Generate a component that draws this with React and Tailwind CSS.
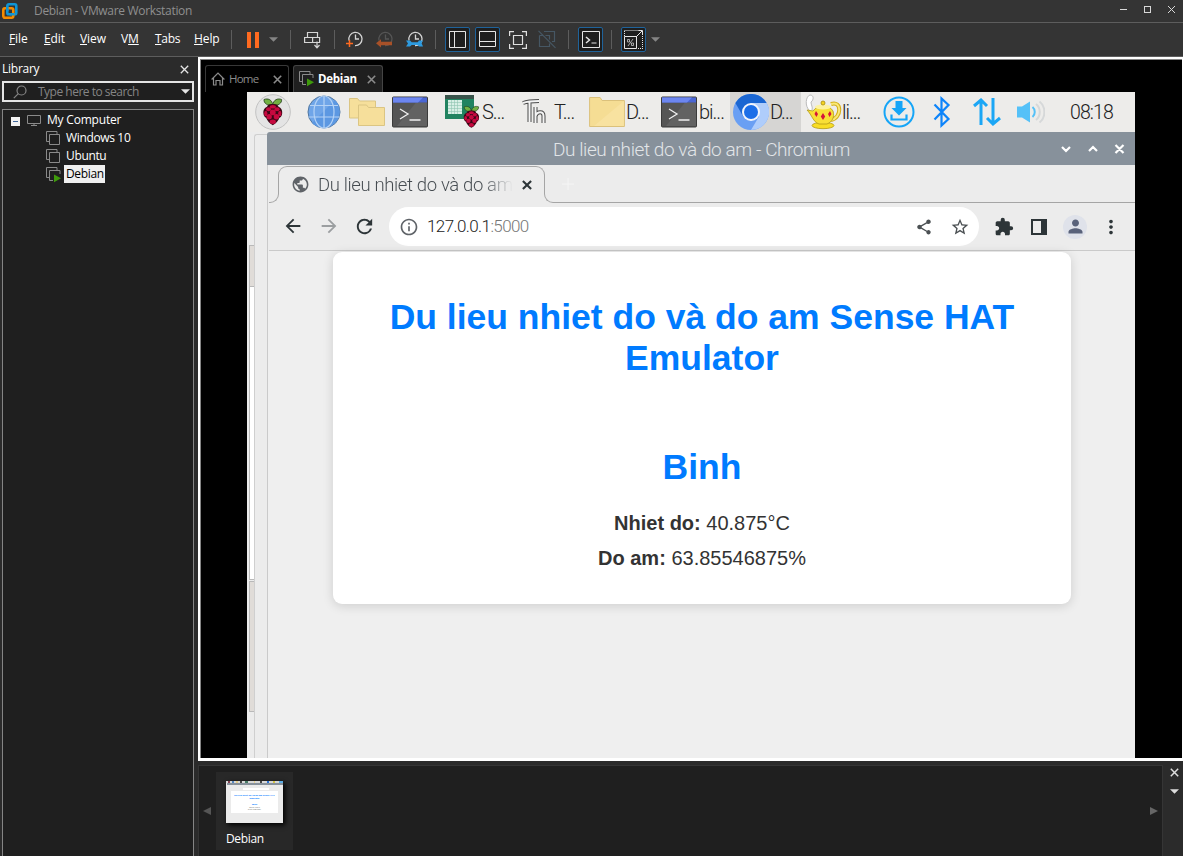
import React from "react";
import {
  MdArrowBack, MdArrowForward, MdRefresh, MdInfoOutline, MdPublic, MdShare,
  MdStarBorder, MdExtension, MdPerson, MdMoreVert,
} from "react-icons/md";

const ui = "font-['Open_Sans','Noto_Sans',sans-serif] text-[12px] leading-[16px] whitespace-nowrap";
const pi = "font-[Roboto,sans-serif] font-light whitespace-nowrap";

function Cross({ className, size = 9, w = 1.6 }) {
  return (
    <svg className={className} width={size} height={size} viewBox="0 0 9 9" fill="none" stroke="currentColor" strokeWidth={w}>
      <path d="M.8.8l7.4 7.4M8.2.8L.8 8.2" />
    </svg>
  );
}

function VmLogo() {
  return (
    <svg width="18" height="18" viewBox="0 0 18 18" fill="none" strokeWidth="2.6">
      <rect x="6.3" y="2.3" width="9" height="10" rx="1.6" stroke="#0f95d4" />
      <rect x="2.3" y="6.3" width="10" height="9.4" rx="1.6" stroke="#f38b00" />
      <path d="M6.3 9V4.5M8.5 12.3h5" stroke="#0f95d4" />
    </svg>
  );
}

function TitleBar() {
  return (
    <header className="flex h-[23px] items-center border-b border-[#5d5d5d] pl-px">
      <VmLogo />
      <span className={`${ui} ml-[15px] w-[1085px] tracking-[-0.32px] text-[#8f8f8f]`}>Debian - VMware Workstation</span>
      <svg width="57" height="9" viewBox="0 0 57 9" fill="none" stroke="#d8d8d8" className="-mt-[3px]">
        <path d="M1 4.5h7" />
        <rect x="25.5" y="1.5" width="6" height="6" />
        <path d="M49 1l7 7M56 1l-7 7" />
      </svg>
    </header>
  );
}

function Clock({ color, children }) {
  return (
    <svg width="18" height="18" viewBox="0 0 18 18" fill="none" stroke={color} strokeWidth="1.3">
      <path d="M3 10.5A6.6 6.6 0 1 1 9 15.6" />
      <path d="M9.5 4.5V9H13" />
      {children}
    </svg>
  );
}

function Boxed({ children }) {
  return <div className="flex size-[25px] items-center justify-center rounded-[2px] border border-[#1f639b] bg-[#1e1e1e]">{children}</div>;
}

const Sep = ({ className }) => <div className={`h-[19px] w-px bg-[#5d5d5d] ${className}`} />;
const Caret = ({ className }) => (
  <svg className={className} width="9" height="5" viewBox="0 0 9 5" fill="currentColor"><path d="M0 .2h9L4.5 4.8z" /></svg>
);

function MenuBar() {
  return (
    <nav className="flex h-[33px] items-center pl-[9px] text-white">
      <div className={`${ui} -mt-px flex tracking-[-0.1px]`}>
        <span className="w-[35px]"><u>F</u>ile</span>
        <span className="w-[36px]"><u>E</u>dit</span>
        <span className="w-[41px]"><u>V</u>iew</span>
        <span className="w-[34px]">V<u>M</u></span>
        <span className="w-[39px] tracking-[-0.3px]"><u>T</u>abs</span>
        <span className="w-[37px]"><u>H</u>elp</span>
      </div>
      <Sep />
      <svg className="ml-[15px]" width="12" height="16" fill="#ff6a1f"><path d="M0 0h4v16H0zM8 0h4v16H8z" /></svg>
      <Caret className="ml-[10px] text-[#858585]" />
      <Sep className="ml-[12px]" />
      <svg className="ml-[13px]" width="18" height="18" viewBox="0 0 18 18" fill="none" stroke="#d5d5d5" strokeWidth="1.200">
        <path d="M3.500 1.500h10v5h-10zM.6 6.500h8v5h-8zM8.600 6.500h7v5h-7zM13 10.500v6M10.500 14l2.500 2.800 2.500-2.800" />
      </svg>
      <Sep className="ml-[12px]" />
      <div className="-mt-px ml-[11px] flex gap-[12px]">
        <Clock color="#d5d5d5"><path d="M3.500 10v7M0 13.500h7" stroke="#ff6a1f" strokeWidth="1.500" /></Clock>
        <Clock color="#555"><path d="M0 13.200l5-4v2.500h11v3.600H5v2.100z" fill="#a85128" stroke="none" /></Clock>
        <Clock color="#d5d5d5"><path d="M0 10.500h4l1.700 1.700h6l1.300-1.700h4l-1.500 2.500 1.500 3.500h-4l-1.300-1.500h-6L4 16.500H0l2-3z" fill="#2d9be0" stroke="none" /></Clock>
      </div>
      <Sep className="ml-[11px]" />
      <div className="ml-[9px] flex gap-[5px]">
        <Boxed>
          <svg width="17" height="17" fill="none" stroke="#e5e5e5"><path d="M.5 .5h16v16H.5zM5.500 .5v16" /></svg>
        </Boxed>
        <Boxed>
          <svg width="17" height="17" fill="none" stroke="#e5e5e5"><path d="M.5 .5h16v15H.5zM.5 10.500h16" /></svg>
        </Boxed>
        <div className="flex size-[25px] items-center justify-center">
          <svg width="18" height="18" fill="none" stroke="#e0e0e0" strokeWidth="1.200"><path d="M.6 5V.6H5M13 .6h4.400V5M17.400 13v4.400H13M5 17.400H.6V13M4.500 4.500h9v9h-9z" /></svg>
        </div>
        <div className="flex size-[25px] items-center justify-center">
          <svg width="19" height="19" fill="none" stroke="#465764" strokeWidth="1.200"><path d="M.5 .8l17 17M6 1.500h10.500v10H14M1.500 5.500h3M1.500 5.500v11h10v-3M7.500 5.500h4v4" /></svg>
        </div>
      </div>
      <Sep className="ml-[8px]" />
      <div className="ml-[9px]">
        <Boxed>
          <svg width="18" height="18" fill="none" stroke="#e5e5e5"><path d="M.5 .5h17v16H.5zM9.500 12h5" /><path d="M4 6l3.500 3L4 12" strokeWidth="1.500" /></svg>
        </Boxed>
      </div>
      <Sep className="ml-[8px]" />
      <div className="ml-[9px]">
        <Boxed>
          <svg width="19" height="19" fill="none" stroke="#e5e5e5">
            <path d="M.5 .5h18M18.500 2v17M14 18.500h5M.5 1v5" strokeDasharray="1 1" />
            <path d="M.5 6.500h12v12H.5zM12 7l6-6M14.500 .5h4v4" />
            <path d="M4 16l5-7M3.500 9.500h2v2.500h-2zM7.500 13h2v2.500h-2z" stroke="#b5b5b5" strokeWidth=".9" />
          </svg>
        </Boxed>
      </div>
      <Caret className="ml-[5px] text-[#858585]" />
    </nav>
  );
}

function VmIcon({ running, className }) {
  return (
    <svg className={className} width="16" height="16" viewBox="0 0 16 16" fill="none" stroke="#8a8a8a">
      <path d="M3 10.500H.5V.5h10.500V3" />
      <path d={running ? "M7 13.500H3.500v-10h10.500V7" : "M3.500 3.500h10v10h-10z"} />
      {running && <path d="M8 7.500l7 3.800-7 4z" fill="#3f9b0b" stroke="none" />}
    </svg>
  );
}

function Library() {
  return (
    <aside className="flex w-[198px] shrink-0 flex-col border-t border-[#5d5d5d] bg-[#2b2b2b] pl-[2px] pr-[4px] text-white">
      <div className="flex h-[24px] items-center justify-between pr-[5px]">
        <span className={`${ui} tracking-[-0.25px]`}>Library</span>
        <Cross className="text-[#e5e5e5]" w={1.300} />
      </div>
      <div className="flex h-[21px] items-center border-2 border-[#e4e4e4] bg-[#1f1f1f] pl-[9px] pr-[2px]">
        <svg width="14" height="14" fill="none" stroke="#858585" strokeWidth="1.200"><circle cx="8.500" cy="5.500" r="4.500" /><path d="M5.300 8.700L.8 13.200" /></svg>
        <span className={`${ui} ml-[11px] grow tracking-[-0.5px] text-[#858585]`}>Type here to search</span>
        <Caret className="text-[#e5e5e5]" />
      </div>
      <div className={`${ui} mt-[7px] grow border border-b-0 border-[#858585] bg-[#1f1f1f] pt-px`}>
        <div className="flex h-[18px] items-center pl-[8px]">
          <svg className="mt-[2px]" width="9" height="9"><path fill="#f2f2f2" d="M0 0h9v9H0z" /><path fill="#42699c" d="M2 4h5v1H2z" /></svg>
          <svg className="mt-[2px] ml-[7px]" width="15" height="13" fill="none" stroke="#8a8a8a"><path d="M.5 .5h13v8H.5zM4 10.500h6M7 8.500v2" /></svg>
          <span className="ml-[5px] tracking-[-0.2px]">My Computer</span>
        </div>
        {["Windows 10", "Ubuntu", "Debian"].map((n) => (
          <div key={n} className="flex h-[18px] items-center pl-[43px]">
            <VmIcon className="mt-px" running={n === "Debian"} />
            <span className={n === "Debian" ? "ml-[2px] h-[18px] w-[41px] bg-[#f0f0f0] pl-[2px] leading-[18px] tracking-[-0.35px] text-black" : "ml-[4px] tracking-[-0.35px]"}>{n}</span>
          </div>
        ))}
      </div>
    </aside>
  );
}

function VmTabs() {
  return (
    <div className={`${ui} flex h-[32px] items-end gap-[4px] pl-[4px]`}>
      <div className="flex h-[27px] w-[84px] items-center rounded-t-[3px] border border-b-0 border-[#383838] pl-[5px] text-[#8b8b8b]">
        <svg width="14" height="14" fill="none" stroke="currentColor" strokeWidth="1.200"><path d="M.6 7.500L7 1l6.400 6.500M2.500 6v7H5V8.500h4V13h2.500V6" /></svg>
        <span className="ml-[4px] w-[44px] text-[11.500px] tracking-[-0.8px]">Home</span>
        <Cross />
      </div>
      <div className="flex h-[27px] w-[90px] items-center rounded-t-[3px] border border-b-0 border-[#444] bg-[#1f1f1f] pl-[5px] text-[#8b8b8b]">
        <VmIcon running />
        <span className="ml-[3px] w-[49px] text-[11.500px] font-bold tracking-[-0.3px] text-white">Debian</span>
        <Cross />
      </div>
    </div>
  );
}

function Berry({ x = 0, y = 0, s = 1 }) {
  return (
    <g transform={`translate(${x} ${y}) scale(${s})`}>
      <path d="M10 6.500C5 7.500 1 4.500 1.500 1 5-.5 9.500 1 10 6.500zM10 6.500c5 1 9-2 8.500-5.500C15-.5 10.500 1 10 6.500z" fill="#72b043" stroke="#24401c" strokeWidth=".8" />
      <path d="M10 5.500c3-.6 5 .6 5.600 2.500 2.400.8 4 3.400 3.500 6.500-.1 2-1.400 3.500-2.600 4.300C15.600 21.500 13 24.500 10 26c-3-1.500-5.600-4.500-6.500-7.200C2.300 18 1 16.500.9 14.500.4 11.400 2 8.800 4.400 8 5 6.100 7 4.900 10 5.500z" fill="#3a0716" />
      <g fill="#c6093f">
        <ellipse cx="10" cy="8" rx="3" ry="1.800" /><ellipse cx="5.900" cy="10.400" rx="2.500" ry="2" /><ellipse cx="14.100" cy="10.400" rx="2.500" ry="2" />
        <circle cx="10" cy="13.500" r="2.800" /><ellipse cx="3.200" cy="14.500" rx="1.600" ry="2.600" /><ellipse cx="16.800" cy="14.500" rx="1.600" ry="2.600" />
        <circle cx="6.500" cy="17.700" r="2.600" /><circle cx="13.500" cy="17.700" r="2.600" /><ellipse cx="10" cy="22.500" rx="3" ry="2.200" />
      </g>
    </g>
  );
}

function TermIcon() {
  return (
    <svg width="36" height="32" viewBox="0 0 36 32">
      <rect x=".5" y="1" width="35" height="30" rx="1" fill="#555" stroke="#3b3b3b" />
      <path d="M24 6.500h11V30H5z" fill="#626262" />
      <path d="M1 1.500h34v5H1z" fill="#4a66d4" /><path d="M1 1.500h30l-5 5H1z" fill="#6c86f0" />
      <path d="M8 13l8 5-8 5M17.500 24h11" fill="none" stroke="#f0f0f0" strokeWidth="1.300" />
    </svg>
  );
}

function FolderIcon() {
  return (
    <svg width="36" height="32" viewBox="0 0 36 32">
      <path d="M.6 1.500h10.500l2 3h22.300v26H.6z" fill="#f5dd94" stroke="#dbc17b" />
      <path d="M34.900 5v25H5z" fill="#f8e2a0" />
    </svg>
  );
}

function PiPanel() {
  return (
    <div className={`${pi} flex h-[40px] items-center bg-[#edecea] pl-[8px] text-[20px] tracking-[-1px] text-[#222]`}>
      <svg width="36" height="36" viewBox="0 0 36 36"><circle cx="18" cy="18" r="17.300" fill="#e4e4e4" stroke="#c2c2c2" /><Berry x={7.500} y={4.500} s={1.030} /></svg>
      <svg className="ml-[16px]" width="34" height="34" viewBox="0 0 34 34">
        <circle cx="17" cy="17" r="16" fill="#6fa5e8" stroke="#52779f" />
        <path d="M5 28L28 5a16 16 0 0 1-23 23z" fill="#5c98e2" />
        <g fill="none" stroke="#b4d2f5" strokeWidth="1.200"><path d="M17 1v32M3 10.500h28M1.500 22h31" /><ellipse cx="17" cy="17" rx="10" ry="16" /></g>
      </svg>
      <svg className="ml-[8px]" width="36" height="32" viewBox="0 0 36 32" fill="#f6df9b" stroke="#dbc583">
        <path d="M.5 2.500h8l2 2.500h16v17H.5z" /><path d="M9.500 9h8l2 2.500h16v18h-26z" />
      </svg>
      <div className="ml-[7px]"><TermIcon /></div>
      <svg className="ml-[16px]" width="36" height="34" viewBox="0 0 36 34">
        <path d="M1 2h29v22H1z" fill="#218360" /><path d="M1 0h29v4H1z" fill="#38534a" />
        <path d="M4 5h14v14H4z" fill="#d7efe5" /><path d="M4 7.500h14M4 10.500h14M4 13.500h14M4 16.500h14M7.500 5v14M10.500 5v14M13.500 5v14" stroke="#8fc4b0" strokeWidth=".6" />
        <Berry x={19} y={11} s={.84} />
      </svg>
      <span className="w-[42px] pl-[2px]">S...</span>
      <svg width="24" height="26" viewBox="0 0 24 26" fill="none" strokeLinejoin="round">
        <path d="M1 4c5-2 11-2 16-2M7.500 3v20M13.500 8v16M13.500 17c2-5 8-5 8 0v7" stroke="#4b4b4b" strokeWidth="4" />
        <path d="M1 4c5-2 11-2 16-2M7.500 3v20M13.500 8v16M13.500 17c2-5 8-5 8 0v7" stroke="#f4f4f4" strokeWidth="2" />
      </svg>
      <span className="w-[43px] pl-[8px]">T...</span>
      <FolderIcon /><span className="w-[36px] pl-px">D...</span>
      <TermIcon /><span className="w-[33px] pl-[2px]">bi...</span>
      <div className="flex h-[40px] w-[71px] items-center bg-[#d6d5d3] pl-[3px]">
        <svg className="shrink-0" width="36" height="36" viewBox="0 0 36 36">
          <circle cx="18" cy="18" r="18" fill="#6a9ff3" />
          <path d="M2.400 9a18 18 0 0 1 31.200 0L18 9.500 10.500 23z" fill="#1a66d2" />
          <path d="M33.600 9A18 18 0 0 1 18 36l8-13.500L18 9z" fill="#afcdfb" />
          <circle cx="18" cy="18" r="9" fill="#f2f5fb" /><circle cx="18" cy="18" r="7" fill="#1b6ee8" />
        </svg>
        <span className="pl-px">D...</span>
      </div>
      <svg className="ml-[4px]" width="37" height="36" viewBox="0 0 37 36">
        <path d="M5 17c-6-5-4-15 0-16 4 0 4 5 1 7 0 3 2 5 1 8" fill="#fff" stroke="#bbb" />
        <ellipse cx="18" cy="31.500" rx="11" ry="3.200" fill="#f8dd24" stroke="#b39a18" strokeWidth=".8" />
        <path d="M26 10c11-4 11 14 0 16" fill="none" stroke="#d3ae19" strokeWidth="4" /><path d="M26 10c11-4 11 14 0 16" fill="none" stroke="#f9e878" strokeWidth="2" />
        <path d="M2 16l6 1c5-7 16-7 20 0 2 6-1 11-6 13H14C8 28 7 21 2 16z" fill="#f8df35" stroke="#b39a18" strokeWidth=".8" />
        <ellipse cx="18" cy="13" rx="8" ry="2.500" fill="#fdf2a0" /><circle cx="18" cy="9" r="2" fill="#f4d320" stroke="#a78b0e" strokeWidth=".8" />
        <path d="M18 19l2.200 3.500L18 26l-2.200-3.500zM11 17l2 3-1.500 3-2-3zM25 17l-2 3 1.500 3 2-3z" fill="#d5143a" />
      </svg>
      <span className="w-[41px]">li...</span>
      <svg width="32" height="32" viewBox="0 0 32 32"><circle cx="16" cy="16" r="14.500" fill="none" stroke="#16a5f7" strokeWidth="2" /><path d="M12.500 5h7v7h4L16 19.500 8.500 12h4z" fill="#16a5f7" /><path d="M8.500 18.500v5h15v-5" fill="none" stroke="#16a5f7" strokeWidth="2.200" /></svg>
      <svg className="ml-[18px]" width="18" height="32" viewBox="0 0 18 32" fill="none" stroke="#0d84fa" strokeWidth="2.200"><path d="M1.500 8.500l14 14.500-7 6.500v-27l7 6.500L1.500 23.500" /></svg>
      <svg className="ml-[22px]" width="28" height="28" viewBox="0 0 28 28" fill="none" stroke="#1ba6f5" strokeWidth="3"><path d="M8 27V3M1 8l7-6 6 6M20 0v25M14 20l6 6 7-6" /></svg>
      <svg className="ml-[15px]" width="29" height="24" viewBox="0 0 29 24" fill="none"><path d="M1 6.500h5L14 1.500v21l-8-5H1z" fill="#55c1f8" /><path d="M16.500 7c3 2.500 3 7.500 0 10" stroke="#55c1f8" strokeWidth="2" /><path d="M20 4c5 4 5 12 0 16M23.500 1.500c6.500 5 6.500 16 0 21" stroke="#d6d8d9" strokeWidth="2" /></svg>
      <span className="ml-[25px] pt-px text-[19.500px] tracking-[-0.9px]">08:18</span>
    </div>
  );
}

function BackWindow() {
  return (
    <div className="flex w-[20px] shrink-0 bg-[#ececec] pt-[2px]">
      <div className="flex w-[7px] flex-col pl-[2px]">
        <div className="h-[111px]" />
        <div className="h-[42px] border border-r-0 border-[#b9b9b9] bg-[#e0dcd8]" />
        <div className="h-[293px] border-b border-l border-[#b9b9b9] bg-white" />
        <div className="mt-px h-[131px] border border-r-0 border-[#b9b9b9] bg-[#e0dcd8]" />
      </div>
      <div className="grow rounded-tl-[3px] border-t border-l border-[#cfcfcf]" />
    </div>
  );
}

function Chromium() {
  return (
    <div className="flex min-w-0 grow flex-col bg-[#ececec]">
      <div className={`${pi} flex h-[33px] items-center rounded-tl-[3px] bg-[#87919b] text-[#e2e5e8]`}>
        <span className="ml-[286px] w-[508px] pt-[3px] text-[19px] tracking-[-0.42px]">Du lieu nhiet do và do am - Chromium</span>
        <svg className="mt-px" width="66" height="12" viewBox="0 0 66 12" fill="none" stroke="#fff" strokeWidth="2.200"><path d="M1 4l4 4 4-4M28 8l4-4 4 4M54.500 2l8 8M62.500 2l-8 8" /></svg>
      </div>
      <div className="flex grow flex-col border-l border-[#cacaca]">
        <div className="flex h-[38px] items-end pl-px">
          <div className="h-[10px] w-[10px] rounded-br-[9px] border-r border-b border-[#a5a5a5]" />
          <div className="z-10 -ml-px mb-[9px] h-[28px] w-[267px] rounded-t-[9px] border border-b-0 border-[#a5a5a5]">
            <div className={`${pi} flex h-[36px] items-center pl-[12px]`}>
              <MdPublic size={19} className="-mt-px text-[#5f6368]" />
              <span className="ml-[8px] w-[195px] shrink-0 bg-linear-to-r from-[#454b50] from-84% to-[#ececec] bg-clip-text pt-px text-[18.500px] tracking-[-0.36px] text-transparent">Du lieu nhiet do và do am</span>
              <Cross className="-mt-px ml-[9px] shrink-0 text-[#2d3538]" size={10} w={1.900} />
            </div>
          </div>
          <div className="-ml-px flex h-[38px] grow flex-col justify-between">
            <svg className="mt-[13px] ml-[18px]" width="12" height="12" stroke="#f5f5f5"><path d="M6 0v12M0 6h12" /></svg>
            <div className="h-[10px] rounded-bl-[9px] border-b border-l border-[#a5a5a5]" />
          </div>
        </div>
        <div className="ml-px flex h-[48px] items-center border-b border-[#cacaca] pl-[13px] text-[#2d3538]">
          <MdArrowBack size={22} className="-mt-px" />
          <MdArrowForward size={22} className="-mt-px ml-[14px] text-[#9b9ea0]" />
          <MdRefresh size={23} className="-mt-px ml-[13px]" />
          <div className={`${pi} ml-[13px] flex h-[39px] w-[590px] items-center rounded-full bg-white pl-[10px] text-[17px]`}>
            <MdInfoOutline size={20} className="text-[#5f6368]" />
            <span className="ml-[8px] w-[488px] tracking-[-0.6px] text-[#222]">127.0.0.1<span className="text-[#777]">:5000</span></span>
            <MdShare size={18} className="text-[#4b5053]" />
            <MdStarBorder size={20} className="ml-[17px] text-[#4b5053]" />
          </div>
          <MdExtension size={20} className="ml-[15px]" />
          <svg className="ml-[17px]" width="16" height="16"><path d="M1 1h14v14H1z" fill="none" stroke="currentColor" strokeWidth="2" /><path d="M10 0h6v16h-6z" fill="currentColor" /></svg>
          <div className="ml-[16px] flex size-[24px] items-center justify-center rounded-full bg-[#dfe2ea] text-[#59627a]"><MdPerson size={21} /></div>
          <MdMoreVert size={22} className="ml-[13px]" />
        </div>
        <div className="grow bg-[#efefef] pt-px pl-[65px] font-['Liberation_Sans',Arial,sans-serif]">
          <div className="h-[352px] w-[738px] rounded-[9px] bg-white px-[40px] pt-[45px] text-center text-[20px] text-[#333] shadow-[0_2px_11px_rgba(0,0,0,0.14)]">
            <h1 className="text-[35.500px] leading-[41px] font-bold text-[#007bff]">Du lieu nhiet do và do am Sense HAT<br />Emulator</h1>
            <h1 className="mt-[68px] text-[35.500px] leading-[41px] font-bold text-[#007bff]">Binh</h1>
            <p className="mt-[24px] leading-[23px]"><b>Nhiet do:</b> 40.875°C</p>
            <p className="mt-[12px] leading-[23px]"><b>Do am:</b> 63.85546875%</p>
          </div>
        </div>
      </div>
    </div>
  );
}

function Thumbnail() {
  return (
    <div className="h-[42px] w-[57px] overflow-hidden bg-[#ebebeb] font-['Liberation_Sans',sans-serif] shadow-[2px_2px_5px_#000]">
      <div className="flex h-[2px] gap-[2px] bg-[#d8d8d8] pl-[2px]">
        <div className="w-[2px] bg-[#804050]" /><div className="w-[2px] bg-[#5588c0]" /><div className="w-[2px] bg-[#e6cf8c]" /><div className="w-[2px] bg-[#444]" /><div className="ml-px w-[3px] bg-[#477b66]" /><div className="ml-[4px] w-[2px] bg-[#e6cf8c]" /><div className="ml-[3px] w-[2px] bg-[#444]" /><div className="ml-[3px] w-[2px] bg-[#2b72d5]" /><div className="ml-[2px] w-[2px] bg-[#d6c548]" /><div className="ml-[2px] w-[4px] bg-[#5dade5]" />
      </div>
      <div className="ml-px h-[2px] bg-[#87919b]" />
      <div className="mt-[3px] ml-[17px] h-[2px] w-[26px] bg-white" />
      <div className="mt-px ml-[5px] h-[22px] w-[47px] bg-white pt-[3px] text-center text-[1.250px] leading-[1.500px] text-[#555]">
        <div className="text-[2.300px] leading-[2.600px] font-bold whitespace-nowrap text-[#007bff]">Du lieu nhiet do và do am Sense HAT<br />Emulator</div>
        <div className="mt-[4px] text-[2.300px] leading-[2.600px] font-bold text-[#007bff]">Binh</div>
        <div className="mt-[1.500px] leading-[2.200px]">Nhiet do: 40.875°C<br />Do am: 63.85546875%</div>
      </div>
    </div>
  );
}

function Strip() {
  return (
    <div className="flex h-[95px] bg-[#2b2b2b] pt-[4px]">
      <div className="flex w-[965px] items-start border border-b-0 border-[#353535] bg-[#1f1f1f] pt-[6px]">
        <svg className="mt-[35px] ml-[4px]" width="8" height="8" fill="#555"><path d="M8 0v8L0 4z" /></svg>
        <div className="ml-[5px] h-[78px] w-[77px] bg-[#282828] pt-[9px] pl-[10px]">
          <Thumbnail />
          <div className={`${ui} mt-[8px] tracking-[-0.35px] text-white`}>Debian</div>
        </div>
        <svg className="mt-[35px] ml-[857px]" width="8" height="8" fill="#666"><path d="M0 0v8l8-4z" /></svg>
      </div>
      <div className="flex flex-col items-center gap-[12px] pt-[3px] pl-[7px] text-[#ddd]">
        <Cross w={1.500} />
        <Caret />
      </div>
    </div>
  );
}

export default function App() {
  return (
    <div className="flex h-[856px] w-[1183px] flex-col overflow-hidden bg-[#343434]">
      <TitleBar />
      <MenuBar />
      <div className="flex min-h-0 grow">
        <Library />
        <main className="flex min-w-0 grow flex-col border-t border-[#5d5d5d]">
          <div className="h-[704px] border-y-2 border-r border-b-3 border-l-2 border-white bg-black">
            <div className="h-[699px] border-t border-l border-[#858585]">
              <VmTabs />
              <div className="ml-[46px] flex h-[666px] w-[888px] flex-col bg-[#ececec]">
                <PiPanel />
                <div className="flex min-h-0 grow">
                  <BackWindow />
                  <Chromium />
                </div>
              </div>
            </div>
          </div>
          <Strip />
        </main>
      </div>
    </div>
  );
}
